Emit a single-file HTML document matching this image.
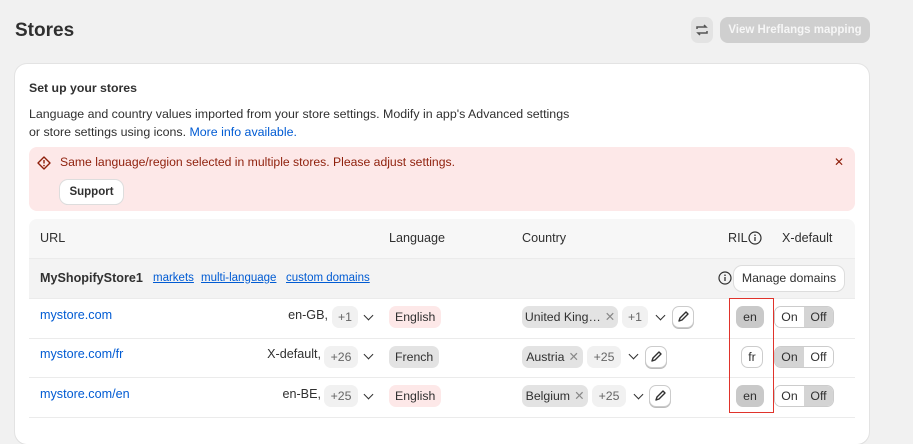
<!DOCTYPE html>
<html><head><meta charset="utf-8"><style>
*{box-sizing:border-box;margin:0;padding:0}
body{width:913px;height:420px;overflow:hidden;background:#f1f1f1;font-family:"Liberation Sans",sans-serif;font-size:12.6px;color:#303030;position:relative}
.a{position:absolute;white-space:nowrap}
.card{position:absolute;left:15px;top:64px;width:854px;height:380px;background:#fff;border-radius:12px;box-shadow:0 1px 0 #ddd,0 0 0 1px #e3e3e3}
.tag{position:absolute;height:22px;line-height:22px;border-radius:7px;padding:0 6px;font-size:12.3px;text-align:center}
.chev{position:absolute;width:7px;height:7px;border-right:1.6px solid #303030;border-bottom:1.6px solid #303030;transform:rotate(45deg)}
.pen{position:absolute;width:22px;height:22px;border:1px solid #ccc;border-radius:7px;background:#fff;box-shadow:0 1px 0 #bbb}
.tog{position:absolute;left:774px;width:60px;height:22px;border:1px solid #ccc;border-radius:7px;overflow:hidden;font-size:12.3px;display:flex}
.tog span{flex:1;text-align:center;line-height:20px}
.link{color:#005bd3}
.row{position:absolute;left:29px;width:826px;border-top:1px solid #ebebeb}
.x{color:#888;margin-left:4px}
</style></head><body>
<div class="a" style="left:15px;top:20px;font-size:19px;font-weight:bold;color:#303030">Stores</div>
<div class="a" style="left:691px;top:17px;width:22px;height:26px;background:#e3e3e3;border-radius:7px"><svg width="22" height="26" viewBox="0 0 22 26"><path d="M6 12v-2h9l-2-2M16 14v2H7l2 2" fill="none" stroke="#555" stroke-width="1.5"/></svg></div>
<div class="a" style="left:720px;top:17px;width:150px;height:26px;background:#cfcfcf;border-radius:8px;color:#f6f6f6;font-weight:bold;font-size:11.5px;line-height:26px;text-align:center">View Hreflangs mapping</div>
<div class="card"></div>
<div class="a" style="left:29px;top:81px;font-weight:bold;font-size:12.3px">Set up your stores</div>
<div class="a" style="left:29px;top:105px;line-height:18px;font-size:12.4px">Language and country values imported from your store settings. Modify in app's Advanced settings<br>or store settings using icons. <span class="link">More info available.</span></div>
<div class="a" style="left:29px;top:147px;width:826px;height:64px;background:#fde8e8;border-radius:8px"></div>
<svg class="a" style="left:37px;top:156px" width="14" height="14" viewBox="0 0 14 14"><path d="M7 1L13 7 7 13 1 7Z" fill="none" stroke="#8e1f0b" stroke-width="1.4" stroke-linejoin="round"/><path d="M7 4v3.5" stroke="#8e1f0b" stroke-width="1.4"/><circle cx="7" cy="9.6" r=".8" fill="#8e1f0b"/></svg>
<div class="a" style="left:60px;top:155px;color:#8e1f0b;font-size:12.2px">Same language/region selected in multiple stores. Please adjust settings.</div>
<div class="a" style="left:834px;top:155px;color:#8e1f0b;font-size:12px">✕</div>
<div class="a" style="left:60px;top:180px;width:63px;height:24px;background:#fff;border-radius:8px;box-shadow:0 0 0 1px #ddd,0 1px 0 #bbb;font-weight:bold;font-size:11.5px;line-height:24px;text-align:center">Support</div>
<div class="a" style="left:29px;top:219px;width:826px;height:80px;background:#f7f7f7;border-radius:8px 8px 0 0"></div>
<div class="a" style="left:40px;top:231px">URL</div>
<div class="a" style="left:389px;top:231px">Language</div>
<div class="a" style="left:522px;top:231px">Country</div>
<div class="a" style="left:728px;top:231px">RIL</div>
<svg class="a" style="left:748px;top:231px" width="14" height="14"><circle cx="7" cy="7" r="6" fill="none" stroke="#303030" stroke-width="1.2"/><path d="M7 6v4" stroke="#303030" stroke-width="1.3"/><circle cx="7" cy="4.2" r=".8" fill="#303030"/></svg>
<div class="a" style="left:782px;top:231px">X-default</div>
<div class="row" style="top:258px;background:#f3f3f3;height:40px"></div>
<div class="a" style="left:40px;top:271px;font-weight:bold">MyShopifyStore1</div>
<div class="a link" style="left:153px;top:272px;font-size:11.5px;text-decoration:underline">markets</div>
<div class="a link" style="left:201px;top:272px;font-size:11.5px;text-decoration:underline">multi-language</div>
<div class="a link" style="left:286px;top:272px;font-size:11.5px;text-decoration:underline">custom domains</div>
<svg class="a" style="left:718px;top:271px" width="14" height="14"><circle cx="7" cy="7" r="6" fill="none" stroke="#303030" stroke-width="1.2"/><path d="M7 6v4" stroke="#303030" stroke-width="1.3"/><circle cx="7" cy="4.2" r=".8" fill="#303030"/></svg>
<div class="a" style="left:734px;top:266px;width:110px;height:25px;background:#fff;border-radius:8px;box-shadow:0 0 0 1px #ddd,0 1px 0 #bbb;line-height:25px;text-align:center;font-size:12.3px">Manage domains</div>
<div class="row" style="top:298px;height:1px"></div>
<div class="row" style="top:338px;height:1px"></div>
<div class="row" style="top:377px;height:1px"></div>
<div class="row" style="top:417px;height:1px"></div>
<!-- row 1 -->
<div class="a link" style="left:40px;top:308px">mystore.com</div>
<div class="a" style="right:585px;top:308px">en-GB,</div>
<div class="tag" style="left:332px;top:306px;width:26px;padding:0;background:#f1f1f1;color:#666">+1</div>
<div class="chev" style="left:365px;top:312px"></div>
<div class="tag" style="left:389px;top:306px;background:#fde8e8">English</div>
<div class="tag" style="left:522px;top:306px;width:96px;padding:0;background:#e3e3e3">United King…<span class="x">✕</span></div>
<div class="tag" style="left:622px;top:306px;width:26px;padding:0;background:#f1f1f1;color:#666">+1</div>
<div class="chev" style="left:657px;top:312px"></div>
<div class="pen" style="left:672px;top:306px"><svg width="20" height="20"><path d="M6 14l1-3 6-6 2 2-6 6z" fill="none" stroke="#303030" stroke-width="1.4" stroke-linejoin="round"/></svg></div>
<div class="tag" style="left:736px;top:306px;width:28px;padding:0;background:#c9c9c9">en</div>
<div class="tog" style="top:306px"><span style="background:#fff">On</span><span style="background:#d4d4d4">Off</span></div>
<!-- row 2 -->
<div class="a link" style="left:40px;top:347px">mystore.com/fr</div>
<div class="a" style="right:592px;top:347px">X-default,</div>
<div class="tag" style="left:324px;top:346px;width:34px;padding:0;background:#f1f1f1;color:#666">+26</div>
<div class="chev" style="left:365px;top:351px"></div>
<div class="tag" style="left:389px;top:346px;background:#e3e3e3">French</div>
<div class="tag" style="left:522px;top:346px;width:61px;padding:0;background:#e3e3e3">Austria<span class="x">✕</span></div>
<div class="tag" style="left:587px;top:346px;width:34px;padding:0;background:#f1f1f1;color:#666">+25</div>
<div class="chev" style="left:630px;top:351px"></div>
<div class="pen" style="left:645px;top:346px"><svg width="20" height="20"><path d="M6 14l1-3 6-6 2 2-6 6z" fill="none" stroke="#303030" stroke-width="1.4" stroke-linejoin="round"/></svg></div>
<div class="tag" style="left:741px;top:346px;width:22px;padding:0;background:#fff;border:1px solid #ccc;line-height:20px">fr</div>
<div class="tog" style="top:346px"><span style="background:#d4d4d4">On</span><span style="background:#fff">Off</span></div>
<!-- row 3 -->
<div class="a link" style="left:40px;top:387px">mystore.com/en</div>
<div class="a" style="right:592px;top:387px">en-BE,</div>
<div class="tag" style="left:324px;top:385px;width:34px;padding:0;background:#f1f1f1;color:#666">+25</div>
<div class="chev" style="left:365px;top:391px"></div>
<div class="tag" style="left:389px;top:385px;background:#fde8e8">English</div>
<div class="tag" style="left:522px;top:385px;width:66px;padding:0;background:#e3e3e3">Belgium<span class="x">✕</span></div>
<div class="tag" style="left:592px;top:385px;width:34px;padding:0;background:#f1f1f1;color:#666">+25</div>
<div class="chev" style="left:635px;top:391px"></div>
<div class="pen" style="left:649px;top:385px"><svg width="20" height="20"><path d="M6 14l1-3 6-6 2 2-6 6z" fill="none" stroke="#303030" stroke-width="1.4" stroke-linejoin="round"/></svg></div>
<div class="tag" style="left:736px;top:385px;width:28px;padding:0;background:#c9c9c9">en</div>
<div class="tog" style="top:385px"><span style="background:#fff">On</span><span style="background:#d4d4d4">Off</span></div>
<div class="a" style="left:729px;top:298px;width:45px;height:115px;border:1.5px solid #e0332b"></div>
</body></html>
